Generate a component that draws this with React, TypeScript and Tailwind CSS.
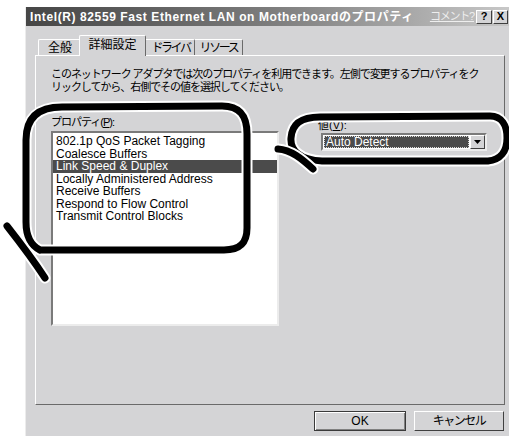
import React from "react";

const properties = [
  "802.1p QoS Packet Tagging",
  "Coalesce Buffers",
  "Link Speed & Duplex",
  "Locally Administered Address",
  "Receive Buffers",
  "Respond to Flow Control",
  "Transmit Control Blocks",
];

const selectedProperty = "Link Speed & Duplex";

// Hand-drawn marker loops layered over the dialog
const Marker = ({ d }: { d: string }) => (
  <>
    <path d={d} fill="none" stroke="#ffffff" strokeWidth={11} strokeLinecap="round" strokeLinejoin="round" />
    <path d={d} fill="none" stroke="#000000" strokeWidth={7} strokeLinecap="round" strokeLinejoin="round" />
  </>
);

export default function App() {
  return (
    <div className="relative w-[509px] h-[436px] overflow-hidden bg-white font-['Liberation_Sans','Noto_Sans_CJK_JP',sans-serif] text-black">
      <div className="ml-[25px] mt-[7px] w-[484px] h-[440px] bg-[#d4d4d6] border-l border-[#ececec] flex flex-col">
        {/* title bar */}
        <div className="h-[19px] flex items-center bg-linear-to-r from-[#464646] via-[#7c7c7c] to-[#c8c8c8] pl-[4px] pr-[1px]">
          <span className="text-white font-bold text-[12px] tracking-[0.6px] whitespace-nowrap">
            Intel(R) 82559 Fast Ethernet LAN on Motherboardのプロパティ
          </span>
          <span className="ml-auto mr-[2px] text-[11px] tracking-[-1.2px] text-[#eeeeee] underline whitespace-nowrap">
            コメント?
          </span>
          <div className="w-[16px] h-[14px] bg-[#d4d4d6] border border-t-white border-l-white border-r-[#404040] border-b-[#404040] flex items-center justify-center text-[11px] font-bold leading-none">
            ?
          </div>
          <div className="ml-px w-[15px] h-[14px] bg-[#d4d4d6] border border-t-white border-l-white border-r-[#404040] border-b-[#404040] flex items-center justify-center text-[11px] font-bold leading-none">
            X
          </div>
        </div>

        {/* tabs */}
        <div className="mt-[9px] ml-[9px] pl-[3px] h-[20px] flex items-end text-[12px] leading-none">
          <div className="w-[43px] h-[16px] border-t border-l border-white rounded-tl-[2px] flex items-center justify-center">
            全般
          </div>
          <div className="relative z-10 -mx-[2px] -mb-px w-[67px] h-[21px] bg-[#d4d4d6] border-t border-l border-white border-r border-r-[#6a6a6a] rounded-t-[2px] flex items-start pt-[3px] justify-center">
            詳細設定
          </div>
          <div className="w-[51px] h-[16px] border-t border-white border-r border-r-[#6a6a6a] rounded-tr-[2px] flex items-center justify-center pl-[3px] tracking-[-2.4px]">
            ドライバ
          </div>
          <div className="w-[48px] h-[16px] border-t border-white border-r border-r-[#6a6a6a] rounded-tr-[2px] flex items-center justify-center tracking-[-2.4px]">
            リソース
          </div>
        </div>

        {/* tab panel */}
        <div className="ml-[9px] w-[470px] h-[350px] border-t border-l border-white border-r border-b border-r-[#6a6a6a] border-b-[#6a6a6a] pl-[15px] pt-[12px]">
          <p className="text-[11px] leading-[13px] tracking-[-1.05px] whitespace-nowrap">
            このネットワーク アダプタでは次のプロパティを利用できます。左側で変更するプロパティをク
            <br />
            リックしてから、右側でその値を選択してください。
          </p>

          <div className="mt-[22px] flex">
            <div className="w-[228px] flex flex-col">
              <span className="text-[11px] leading-[13px] tracking-[-1px]">
                プロパティ(<span className="underline">P</span>):
              </span>
              <div className="mt-[2px] h-[195px] bg-white border-2 border-t-[#7a7a7a] border-l-[#7a7a7a] border-r-[#ececec] border-b-[#ececec] pt-[2px] text-[12px] leading-[12.5px]">
                {properties.map((p) =>
                  p === selectedProperty ? (
                    <div key={p} className="bg-[#4b4b4b] text-white pl-[3px] whitespace-nowrap">
                      {p}
                    </div>
                  ) : (
                    <div key={p} className="pl-[3px] whitespace-nowrap">
                      {p}
                    </div>
                  )
                )}
              </div>
            </div>

            <div className="ml-[39px] flex flex-col">
              <span className="text-[11px] leading-[13px] pt-[3px]">
                値(<span className="underline">V</span>):
              </span>
              <div className="mt-[1px] ml-[3px] w-[166px] h-[18px] bg-white border-2 border-t-[#7a7a7a] border-l-[#7a7a7a] border-r-[#ececec] border-b-[#ececec] flex items-stretch">
                <div className="flex-1 m-px bg-[#4b4b4b] border border-dotted border-[#d8d8d8] text-white text-[12px] leading-none flex items-center pl-[1px]">
                  Auto Detect
                </div>
                <div className="w-[15px] bg-[#d4d4d6] border border-t-white border-l-white border-r-[#404040] border-b-[#404040] flex items-center justify-center">
                  <svg width="7" height="4" viewBox="0 0 7 4">
                    <path d="M0 0 H7 L3.5 4 Z" fill="#000" />
                  </svg>
                </div>
              </div>
            </div>
          </div>
        </div>

        {/* dialog buttons */}
        <div className="ml-[9px] w-[470px] mt-[6px] flex justify-end gap-[8px] pr-[1px] text-[12px]">
          <button className="w-[92px] h-[20px] bg-[#d4d4d6] border border-[#3a3a3a] shadow-[inset_1px_1px_0_#ffffff,inset_-1px_-1px_0_#808080] flex items-center justify-center">
            OK
          </button>
          <button className="w-[90px] h-[20px] bg-[#d4d4d6] border border-t-white border-l-white border-r-[#404040] border-b-[#404040] flex items-center justify-center tracking-[-1.5px]">
            キャンセル
          </button>
        </div>
      </div>

      <svg className="absolute inset-0 pointer-events-none" width="509" height="436" viewBox="0 0 509 436">
        <Marker d="M 40 250 C 30 245, 26 236, 26 222 L 26 140 C 26 118, 38 107, 62 107 L 222 106 C 240 106, 247 116, 247 134 L 247 228 C 247 243, 240 250, 224 250 L 40 250" />
        <Marker d="M 7 226 C 18 240, 32 258, 45 278" />
        <Marker d="M 322 161 C 300 160, 290 150, 291 138 C 292 124, 301 117, 320 117 L 490 116 C 502 116, 507 126, 507 138 C 507 152, 500 160, 488 161 L 322 161" />
        <Marker d="M 278 149 C 291 150, 301 158, 313 169" />
      </svg>
    </div>
  );
}
